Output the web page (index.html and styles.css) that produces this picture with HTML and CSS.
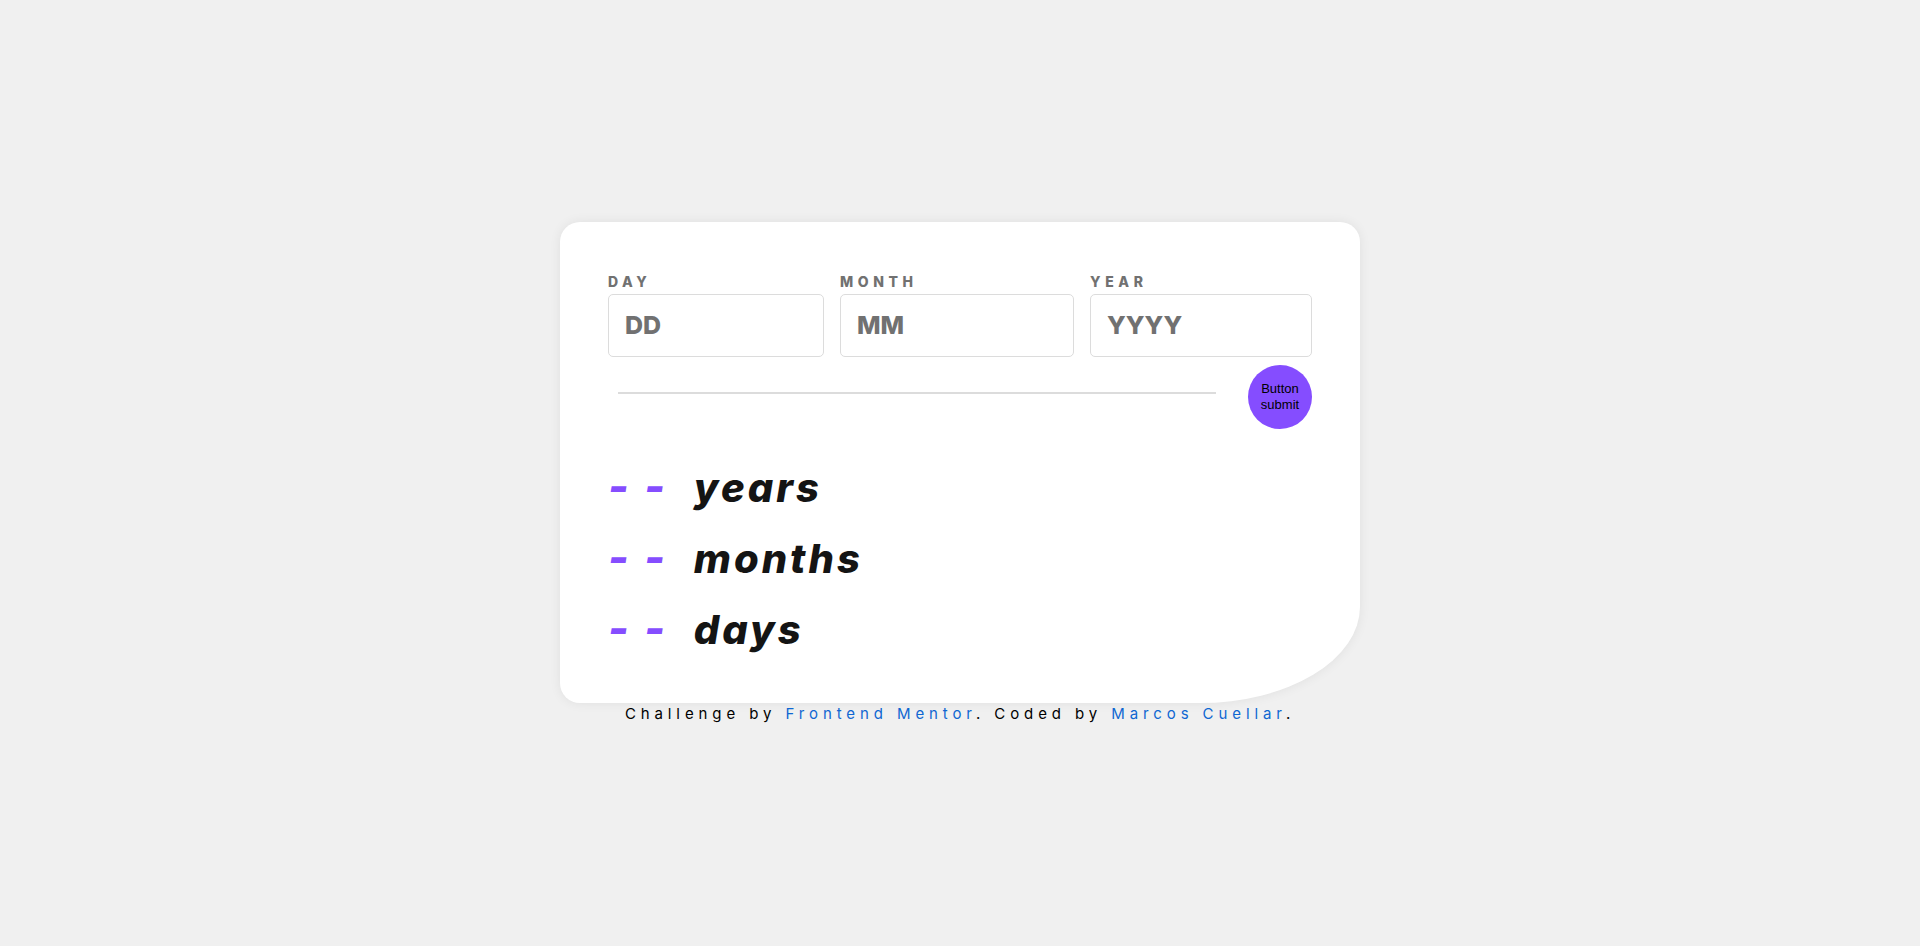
FILE: index.html
```html
<!DOCTYPE html>
<html>
<head>
	<meta charset="UTF-8">
	<title>Age calculator app</title>
	<link rel="stylesheet" href="styles.css">
</head>
<body>
<main class="card">
	<form class="date-form">
		<div class="field">
			<label for="day">Day</label>
			<input id="day" type="text" placeholder="DD">
		</div>
		<div class="field">
			<label for="month">Month</label>
			<input id="month" type="text" placeholder="MM">
		</div>
		<div class="field">
			<label for="year">Year</label>
			<input id="year" type="text" placeholder="YYYY">
		</div>
	</form>

	<div class="divider">
		<span class="line"></span>
		<button class="btn-submit" type="submit">Button submit</button>
	</div>

	<div class="results">
		<p class="result"><span class="num">- -</span> years</p>
		<p class="result"><span class="num">- -</span> months</p>
		<p class="result"><span class="num">- -</span> days</p>
	</div>
</main>

<footer class="attribution">
	Challenge by <a href="#">Frontend Mentor</a>. Coded by <a href="#">Marcos Cuellar</a>.
</footer>
</body>
</html>
```

FILE: styles.css
```css
* {
	box-sizing: border-box;
}
body {
	margin: 0;
	min-height: 946px;
	background-color: #f0f0f0;
	font-family: "Inter", "Liberation Sans", sans-serif;
	display: flex;
	flex-direction: column;
	align-items: center;
	justify-content: center;
}
.card {
	width: 800px;
	background-color: #fff;
	border-radius: 20px 20px 20% 20px;
	box-shadow: 0 0 12px rgba(0, 0, 0, 0.07);
	padding: 51px 48px 38px;
}
.date-form {
	display: grid;
	grid-template-columns: 216px 234px 1fr;
	gap: 16px;
}
.field label {
	display: block;
	font-size: 14px;
	line-height: 18px;
	font-weight: 800;
	letter-spacing: 4.6px;
	text-transform: uppercase;
	color: #717171;
	margin-bottom: 3px;
}
.field input {
	width: 100%;
	height: 63px;
	border: 1px solid #dcdcdc;
	border-radius: 5px;
	padding: 0 16px;
	font-family: inherit;
	font-size: 25px;
	font-weight: 800;
	color: #141414;
	outline: none;
}
.field input::placeholder {
	color: #717171;
}
.divider {
	display: flex;
	align-items: center;
	margin-top: 8px;
}
.line {
	flex: 1;
	height: 2px;
	background-color: #dcdcdc;
	margin: 0 32px 8px 10px;
}
.btn-submit {
	width: 64px;
	height: 64px;
	border: none;
	border-radius: 50%;
	background-color: #854dff;
	color: #000;
	font-family: "Liberation Sans", Arial, sans-serif;
	font-size: 13px;
	line-height: 16px;
	padding: 0 4px;
}
.results {
	margin-top: 23px;
}
.result {
	margin: 0;
	font-size: 40px;
	line-height: 71px;
	font-weight: 800;
	font-style: italic;
	letter-spacing: 3px;
	color: #141414;
}
.num {
	color: #854dff;
	font-size: 44px;
	line-height: 1;
	letter-spacing: 3px;
	margin-right: 14px;
}
.attribution {
	font-size: 15px;
	line-height: 22px;
	letter-spacing: 4.9px;
	color: #000;
	text-align: center;
}
.attribution a {
	color: #0f67d2;
	text-decoration: none;
}
```
